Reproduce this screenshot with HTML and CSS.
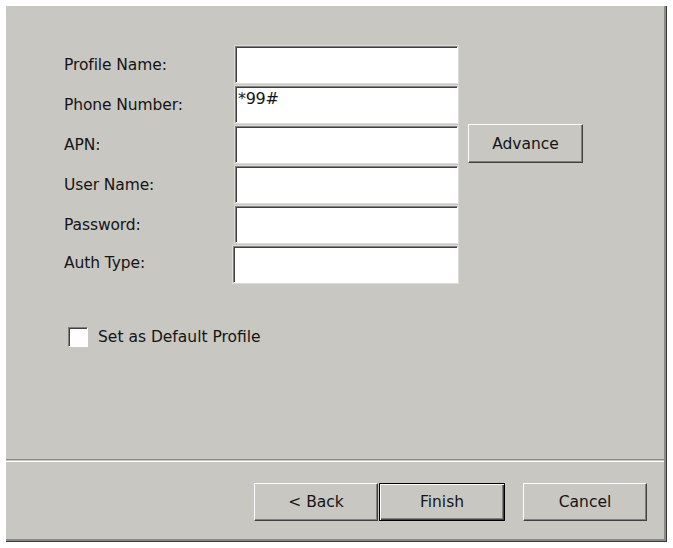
FILE: index.html
```html
<!DOCTYPE html>
<html>
<head>
<meta charset="utf-8">
<link rel="stylesheet" href="styles.css">
</head>
<body>
<div class="panel">
  <div class="form">
    <label class="lbl">Profile Name:</label>
    <div class="field"></div>
    <div></div>

    <label class="lbl">Phone Number:</label>
    <div class="field">*99#</div>
    <div></div>

    <label class="lbl">APN:</label>
    <div class="field"></div>
    <div class="btn adv">Advance</div>

    <label class="lbl">User Name:</label>
    <div class="field"></div>
    <div></div>

    <label class="lbl">Password:</label>
    <div class="field"></div>
    <div></div>

    <label class="lbl lbl-auth">Auth Type:</label>
    <div class="field field-auth"></div>
    <div></div>
  </div>

  <div class="check-row">
    <span class="checkbox"></span>
    <span class="check-text">Set as Default Profile</span>
  </div>

  <div class="spacer"></div>
  <div class="separator"></div>

  <div class="buttons">
    <div class="btn back">&lt; Back</div>
    <div class="btn finish">Finish</div>
    <div class="btn cancel">Cancel</div>
  </div>
</div>
</body>
</html>
```
FILE: styles.css
```css
html, body {
  margin: 0;
  padding: 0;
  background: #ffffff;
}
body {
  padding: 6px 0 0 6px;
  font-family: "DejaVu Sans", "Liberation Sans", sans-serif;
  font-size: 15.5px;
  color: #151515;
}
.panel {
  box-sizing: border-box;
  width: 661px;
  height: 536px;
  background: #c8c7c2;
  border-right: 1px solid #3a3a3a;
  border-bottom: 1px solid #3a3a3a;
  box-shadow: inset -2px -2px 0 #8a8a86;
  display: flex;
  flex-direction: column;
}
.form {
  display: grid;
  grid-template-columns: 161px 223px 115px;
  grid-auto-rows: 37px;
  column-gap: 10px;
  row-gap: 3px;
  padding: 40px 0 0 58px;
  align-items: center;
}
.lbl {
  line-height: 18px;
  letter-spacing: -0.1px;
}
.lbl-auth {
  position: relative;
  top: -2px;
}
.field {
  box-sizing: border-box;
  height: 37px;
  background: #ffffff;
  border-top: 1px solid #808080;
  border-left: 1px solid #808080;
  border-right: 1px solid #ffffff;
  border-bottom: 1px solid #ffffff;
  box-shadow: inset 1px 1px 0 #404040, 0 0 0 1px #dcdcd8;
  padding: 3px 0 0 2px;
  line-height: 17px;
  font-size: 16px;
  letter-spacing: -0.3px;
}
.field-auth {
  margin-left: -2px;
  width: 225px;
}
.btn {
  box-sizing: border-box;
  display: flex;
  align-items: center;
  justify-content: center;
  background: #c8c7c2;
  border-top: 1px solid #ffffff;
  border-left: 1px solid #ffffff;
  border-right: 1px solid #404040;
  border-bottom: 1px solid #404040;
  box-shadow: inset -1px -1px 0 #808080;
}
.adv {
  height: 39px;
  margin-top: -2px;
  width: 115px;
}
.check-row {
  display: flex;
  align-items: center;
  gap: 10px;
  margin: 44px 0 0 62px;
}
.checkbox {
  box-sizing: border-box;
  width: 20px;
  height: 20px;
  background: #ffffff;
  border-top: 1px solid #808080;
  border-left: 1px solid #808080;
  border-right: 1px solid #ffffff;
  border-bottom: 1px solid #ffffff;
  box-shadow: inset 1px 1px 0 #404040;
}
.check-text {
  line-height: 20px;
}
.spacer {
  flex: 1;
}
.separator {
  height: 1px;
  border-top: 1px solid #8a8a86;
  border-bottom: 1px solid #ffffff;
  margin-right: 2px;
}
.buttons {
  display: flex;
  justify-content: flex-end;
  margin-top: 21px;
  padding: 0 19px 20px 0;
}
.buttons .btn {
  height: 38px;
}
.back {
  width: 124px;
}
.finish {
  width: 126px;
  margin-left: 1px;
  border: 1px solid #000000;
  box-shadow: inset 1px 1px 0 #ffffff, inset -1px -1px 0 #404040, inset -2px -2px 0 #808080;
}
.cancel {
  width: 124px;
  margin-left: 18px;
}
```
